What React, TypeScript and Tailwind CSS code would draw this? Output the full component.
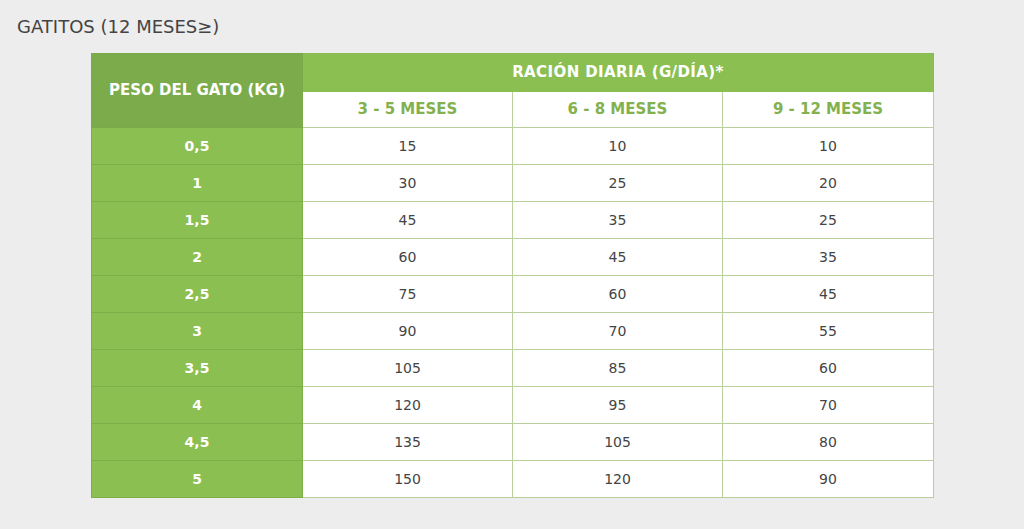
const rows: [string, number, number, number][] = [
  ['0,5', 15, 10, 10],
  ['1', 30, 25, 20],
  ['1,5', 45, 35, 25],
  ['2', 60, 45, 35],
  ['2,5', 75, 60, 45],
  ['3', 90, 70, 55],
  ['3,5', 105, 85, 60],
  ['4', 120, 95, 70],
  ['4,5', 135, 105, 80],
  ['5', 150, 120, 90],
];

const ages = ['3 - 5 MESES', '6 - 8 MESES', '9 - 12 MESES'];

export default function App() {
  return (
    <div className="min-h-[529px] w-full bg-[#ededed] font-['DejaVu_Sans',Verdana,sans-serif]">
      <h2 className="pl-[17px] pt-[16px] text-[18px] leading-[22px] text-[#444]">GATITOS (12 MESES≥)</h2>
      <div className="pl-[91px] pt-[15px]">
        <table className="w-[842px] table-fixed border-collapse text-[14px]">
          <colgroup>
            <col className="w-[211px]" />
            <col className="w-[210px]" />
            <col className="w-[210px]" />
            <col className="w-[211px]" />
          </colgroup>
          <thead>
            <tr className="h-[38px]">
              <th
                rowSpan={2}
                className="border border-[#7aa948] bg-[#7bab4a] text-center text-[15px] font-bold text-white"
              >
                PESO DEL GATO (KG)
              </th>
              <th
                colSpan={3}
                className="border border-[#8bbc53] bg-[#8bbf52] text-center text-[15px] font-bold tracking-[0.4px] text-white"
              >
                RACIÓN DIARIA (G/DÍA)*
              </th>
            </tr>
            <tr className="h-[36px]">
              {ages.map((a) => (
                <th
                  key={a}
                  className="border border-[#b9d09c] bg-white text-center text-[15px] font-bold text-[#82b14e]"
                >
                  {a}
                </th>
              ))}
            </tr>
          </thead>
          <tbody>
            {rows.map(([w, a, b, c]) => (
              <tr key={w} className="h-[37px]">
                <td className="border border-[#7dae48] bg-[#8bbf52] text-center text-[14px] font-bold text-white">
                  {w}
                </td>
                {[a, b, c].map((v, i) => (
                  <td
                    key={i}
                    className="border border-[#b9d09c] bg-white text-center text-[#444]"
                  >
                    {v}
                  </td>
                ))}
              </tr>
            ))}
          </tbody>
        </table>
      </div>
    </div>
  );
}
